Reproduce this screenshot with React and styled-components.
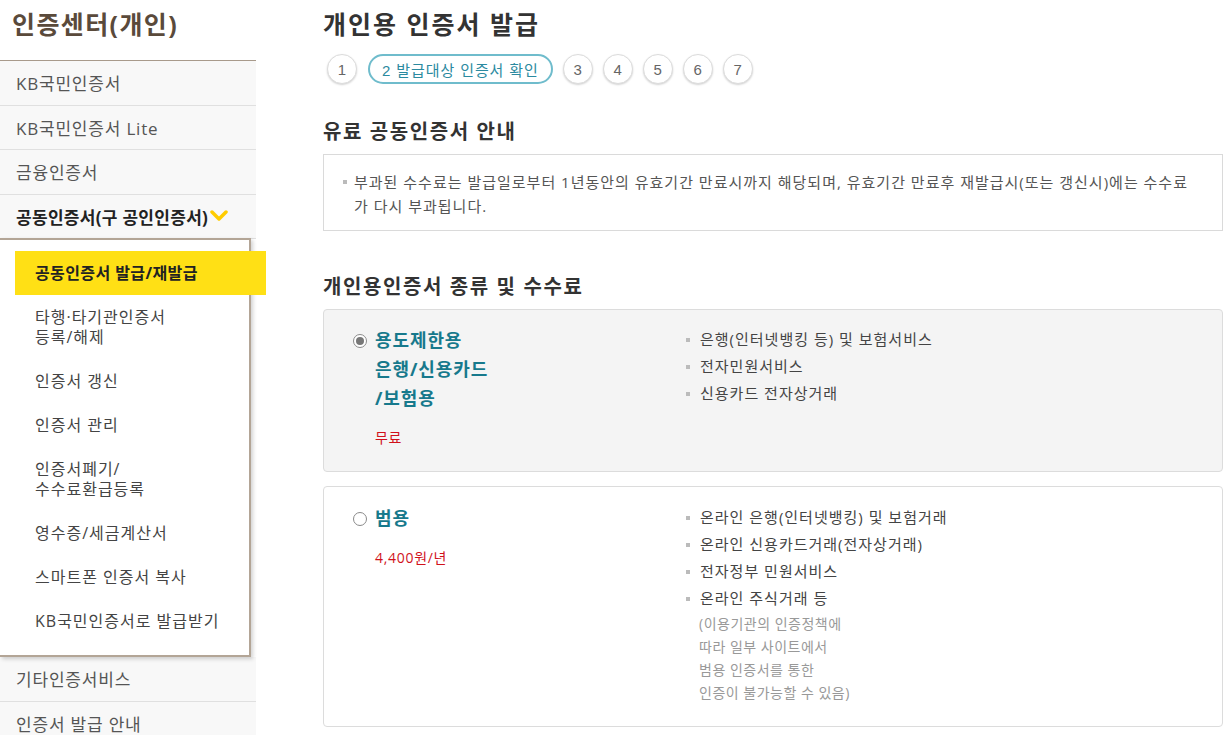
import styled, { createGlobalStyle } from "styled-components";

const GlobalStyle = createGlobalStyle`
    html, body {
        margin: 0;
        padding: 0;
        background: #fff;
        font-family: "Open Sans", "Noto Sans CJK KR", sans-serif;
        color: #333;
    }
    * { box-sizing: border-box; }
`

const StyledPage = styled.div`
    display: flex;
    flex-direction: row;
    width: 1231px;
    height: 735px;
    overflow: hidden;
`
const StyledSide = styled.aside`
    width: 256px;
    flex-shrink: 0;
`
const StyledSideTitle = styled.h1`
    margin: 0;
    height: 60px;
    line-height: 48px;
    padding-left: 12px;
    font-size: 25px;
    font-weight: 700;
    color: #5a4a3b;
    letter-spacing: 1.4px;
`
const StyledMenu = styled.ul`
    list-style: none;
    margin: 0;
    padding: 0;
    border-top: ${p => (p.$line ? "1px solid #a89a8b" : "none")};
`
const StyledMenuItem = styled.li`
    height: 44.5px;
    padding-left: 16px;
    background: #f8f8f8;
    border-bottom: 1px solid #e0e0e0;
    font-size: 17px;
    color: ${p => (p.$active ? "#222" : "#555")};
    font-weight: ${p => (p.$active ? 700 : 400)};
    letter-spacing: ${p => (p.$active ? "0.3px" : "0.8px")};
    display: flex;
    align-items: center;
    gap: 2px;
`
const StyledSubBox = styled.ul`
    list-style: none;
    margin: -1px 0 0 0;
    padding: 11px 0 12px 0;
    width: 251px;
    background: #fff;
    border: 2px solid #b3a596;
    border-left: none;
    box-shadow: 2px 2px 4px rgba(0, 0, 0, 0.18);
    position: relative;
    z-index: 1;
`
const StyledSubItem = styled.li`
    margin: 0 -17px 0 15px;
    padding: 12px 0 12px 20px;
    line-height: 20px;
    font-size: 16px;
    letter-spacing: ${p => (p.$on ? "0.4px" : "1px")};
    color: ${p => (p.$on ? "#222" : "#444")};
    font-weight: ${p => (p.$on ? 700 : 400)};
    background: ${p => (p.$on ? "#ffe015" : "transparent")};
`
const StyledMain = styled.main`
    margin-left: 67px;
    width: 900px;
`
const StyledTitle = styled.h2`
    margin: 0;
    line-height: 48px;
    font-size: 25px;
    font-weight: 700;
    letter-spacing: 2px;
    color: #333;
`
const StyledSteps = styled.ol`
    list-style: none;
    margin: 6px 0 0 4px;
    padding: 0;
    display: flex;
    gap: 10px;
`
const StyledStep = styled.li`
    height: 30px;
    min-width: 30px;
    border-radius: 15px;
    border: ${p => (p.$on ? "2px solid #6fbccc" : "1px solid #dcdcdc")};
    box-shadow: ${p => (p.$on ? "none" : "0 1px 2px rgba(0,0,0,0.18)")};
    background: #fff;
    display: flex;
    align-items: center;
    justify-content: center;
    padding: ${p => (p.$on ? "0 12px" : "0")};
    font-family: "Liberation Sans", "Noto Sans CJK KR", sans-serif;
    font-size: 15px;
    letter-spacing: ${p => (p.$on ? "0.9px" : "0")};
    color: ${p => (p.$on ? "#2b8aa0" : "#666")};
    margin-left: ${p => (p.$on ? "1px" : "0")};
`
const StyledHeading = styled.h3`
    margin: ${p => p.$top} 0 0 0;
    line-height: 28px;
    font-size: 20px;
    font-weight: 700;
    letter-spacing: 1.6px;
    color: #333;
`
const StyledNotice = styled.div`
    margin-top: 8px;
    border: 1px solid #dadada;
    padding: 15px 20px 12px 19px;
    font-size: 15px;
    letter-spacing: 1px;
    line-height: 24px;
    color: #555;
`
const StyledBulletText = styled.p`
    margin: 0;
    position: relative;
    padding-left: 11px;
    &::before {
        content: "";
        position: absolute;
        left: 0;
        top: 10px;
        width: 4px;
        height: 4px;
        background: #bbb;
    }
`
const StyledCard = styled.section`
    margin-top: ${p => p.$top};
    border: 1px solid #dcdcdc;
    border-radius: 4px;
    background: ${p => (p.$gray ? "#f4f4f4" : "#fff")};
    padding: ${p => p.$pad};
    display: grid;
    grid-template-columns: 333px 1fr;
`
const StyledOption = styled.div`
    display: flex;
    flex-direction: row;
    gap: 8px;
`
const StyledRadio = styled.span`
    width: 14px;
    height: 14px;
    flex-shrink: 0;
    margin-top: 8px;
    border-radius: 50%;
    border: 1px solid #8a8a8a;
    background: #fff;
    display: flex;
    align-items: center;
    justify-content: center;
    &::after {
        content: "";
        width: 8px;
        height: 8px;
        border-radius: 50%;
        background: ${p => (p.$checked ? "#777" : "transparent")};
    }
`
const StyledOptionName = styled.div`
    font-size: 18px;
    font-weight: 700;
    line-height: 29px;
    letter-spacing: 0.9px;
    color: #17798c;
`
const StyledPrice = styled.div`
    margin-top: 15px;
    font-size: 14px;
    letter-spacing: 0.7px;
    line-height: 20px;
    color: #d0111b;
`
const StyledUses = styled.ul`
    list-style: none;
    margin: 0;
    padding: 0;
`
const StyledUse = styled.li`
    position: relative;
    padding-left: 14px;
    font-size: 15px;
    letter-spacing: 1px;
    line-height: 27px;
    color: #444;
    &::before {
        content: "";
        position: absolute;
        left: 0;
        top: 12px;
        width: 4px;
        height: 4px;
        background: #bbb;
    }
`
const StyledNote = styled.li`
    padding-left: 13px;
    font-size: 14px;
    letter-spacing: 0.5px;
    line-height: 23px;
    color: #999;
`

const Chevron = () => (
    <svg width="18" height="12" viewBox="0 0 18 12">
        <path d="M2 2 L9 9 L16 2" fill="none" stroke="#ffcc00" strokeWidth="3.5" strokeLinecap="round" strokeLinejoin="round" />
    </svg>
)

const subMenu = [
    ["공동인증서 발급/재발급"],
    ["타행·타기관인증서", "등록/해제"],
    ["인증서 갱신"],
    ["인증서 관리"],
    ["인증서폐기/", "수수료환급등록"],
    ["영수증/세금계산서"],
    ["스마트폰 인증서 복사"],
    ["KB국민인증서로 발급받기"],
]

function App() {
    return (
        <StyledPage>
            <GlobalStyle />
            <StyledSide>
                <StyledSideTitle>인증센터(개인)</StyledSideTitle>
                <StyledMenu $line>
                    <StyledMenuItem>KB국민인증서</StyledMenuItem>
                    <StyledMenuItem>KB국민인증서 Lite</StyledMenuItem>
                    <StyledMenuItem>금융인증서</StyledMenuItem>
                    <StyledMenuItem $active>공동인증서(구 공인인증서)<Chevron /></StyledMenuItem>
                </StyledMenu>
                <StyledSubBox>
                    {subMenu.map((lines, i) => (
                        <StyledSubItem key={i} $on={i === 0}>
                            {lines.map((l, j) => <div key={j}>{l}</div>)}
                        </StyledSubItem>
                    ))}
                </StyledSubBox>
                <StyledMenu>
                    <StyledMenuItem>기타인증서비스</StyledMenuItem>
                    <StyledMenuItem>인증서 발급 안내</StyledMenuItem>
                </StyledMenu>
            </StyledSide>

            <StyledMain>
                <StyledTitle>개인용 인증서 발급</StyledTitle>
                <StyledSteps>
                    <StyledStep>1</StyledStep>
                    <StyledStep $on>2 발급대상 인증서 확인</StyledStep>
                    <StyledStep>3</StyledStep>
                    <StyledStep>4</StyledStep>
                    <StyledStep>5</StyledStep>
                    <StyledStep>6</StyledStep>
                    <StyledStep>7</StyledStep>
                </StyledSteps>

                <StyledHeading $top="34px">유료 공동인증서 안내</StyledHeading>
                <StyledNotice>
                    <StyledBulletText>
                        부과된 수수료는 발급일로부터 1년동안의 유효기간 만료시까지 해당되며, 유효기간 만료후 재발급시(또는 갱신시)에는 수수료가 다시 부과됩니다.
                    </StyledBulletText>
                </StyledNotice>

                <StyledHeading $top="42px">개인용인증서 종류 및 수수료</StyledHeading>
                <StyledCard $gray $top="8px" $pad="16px 20px 23px 29px">
                    <StyledOption>
                        <StyledRadio $checked />
                        <div>
                            <StyledOptionName>용도제한용<br />은행/신용카드<br />/보험용</StyledOptionName>
                            <StyledPrice>무료</StyledPrice>
                        </div>
                    </StyledOption>
                    <StyledUses>
                        <StyledUse>은행(인터넷뱅킹 등) 및 보험서비스</StyledUse>
                        <StyledUse>전자민원서비스</StyledUse>
                        <StyledUse>신용카드 전자상거래</StyledUse>
                    </StyledUses>
                </StyledCard>

                <StyledCard $top="14px" $pad="17px 20px 22px 29px">
                    <StyledOption>
                        <StyledRadio />
                        <div>
                            <StyledOptionName>범용</StyledOptionName>
                            <StyledPrice>4,400원/년</StyledPrice>
                        </div>
                    </StyledOption>
                    <StyledUses>
                        <StyledUse>온라인 은행(인터넷뱅킹) 및 보험거래</StyledUse>
                        <StyledUse>온라인 신용카드거래(전자상거래)</StyledUse>
                        <StyledUse>전자정부 민원서비스</StyledUse>
                        <StyledUse>온라인 주식거래 등</StyledUse>
                        <StyledNote>(이용기관의 인증정책에<br />따라 일부 사이트에서<br />범용 인증서를 통한<br />인증이 불가능할 수 있음)</StyledNote>
                    </StyledUses>
                </StyledCard>
            </StyledMain>
        </StyledPage>
    )
}

export default App;
